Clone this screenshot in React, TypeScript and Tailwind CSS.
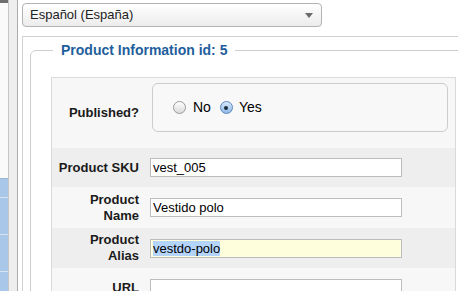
import React from "react";

// selection highlight + yellow focus bg on the alias field
function Radio({ checked }: { checked?: boolean }) {
  return checked ? (
    <span className="w-[13px] h-[13px] rounded-full border border-[#5b87bd] bg-linear-to-b from-[#d7e8fa] to-[#8fb9e8] flex items-center justify-center shrink-0">
      <span className="w-[4px] h-[4px] rounded-full bg-[#1d2b3c]" />
    </span>
  ) : (
    <span className="w-[13px] h-[13px] rounded-full border border-[#9a9a9a] bg-linear-to-b from-[#ffffff] to-[#d9d9d9] shrink-0" />
  );
}

function Label({ lines }: { lines: string[] }) {
  return (
    <div className="w-[94px] shrink-0 pr-[7px] flex flex-col items-end justify-center font-bold text-right leading-[16px] text-[#1a1a1a]">
      {lines.map((l, i) => <span key={i}>{l}</span>)}
    </div>
  );
}

function Field({ value, alias }: { value: string; alias?: boolean }) {
  return (
    <div className={"ml-[4px] w-[252px] h-[19px] border border-[#bdbdbd] px-[2px] leading-[17px] text-black whitespace-nowrap overflow-hidden " + (alias ? "bg-[#fffedc]" : "bg-white")}>
      {alias ? <span className="bg-[#b4d4fc]">{value}</span> : value}
    </div>
  );
}

export default function App() {
  const rows = [
    { lines: ["Product SKU"], value: "vest_005", h: "h-[39px]", bg: "bg-[#eeeeee]" },
    { lines: ["Product", "Name"], value: "Vestido polo", h: "h-[41px]", bg: "bg-[#f7f7f7]" },
    { lines: ["Product", "Alias"], value: "vestdo-polo", h: "h-[40px]", bg: "bg-[#eeeeee]", alias: true },
    { lines: ["URL"], value: "", h: "h-[40px]", bg: "bg-[#f7f7f7]" },
  ];

  return (
    <div className="w-[458px] h-[291px] overflow-hidden bg-white flex font-['Liberation_Sans',Arial,sans-serif] text-[13px] text-[#111]">
      {/* left sidebar strip */}
      <div className="flex w-[18px] shrink-0">
        <div className="w-[8px] flex flex-col">
          <div className="h-[3px] bg-[#6e6e6e]" />
          <div className="h-[181px] bg-[#fafafa]" />
          <div className="h-px bg-[#9db6d0]" />
          <div className="h-[19px] bg-[#a9c8e9]" />
          <div className="h-px bg-[#d6e4f3]" />
          <div className="h-[37px] bg-[#a9c8e9]" />
          <div className="h-px bg-[#d6e4f3]" />
          <div className="h-[37px] bg-[#a9c8e9]" />
          <div className="h-px bg-[#d6e4f3]" />
          <div className="h-[20px] bg-[#a9c8e9]" />
        </div>
        <div className="w-px bg-[#c6c6c6]" />
        <div className="w-[8px] bg-[#eeeeee]" />
        <div className="w-px bg-[#ababab]" />
      </div>

      <div className="w-[520px] shrink-0 pl-[4px] pt-[3px]">
        {/* language select */}
        <div className="w-[300px] h-[24px] rounded-[4px] border border-[#b3b3b3] bg-linear-to-b from-[#ffffff] to-[#ececec] flex items-center justify-between pl-[7px] pr-[8px] text-[#222]">
          <span>Español (España)</span>
          <span className="w-0 h-0 border-l-[4px] border-r-[4px] border-t-[5px] border-l-transparent border-r-transparent border-t-[#6a6a6a]" />
        </div>

        <div className="mt-[9px] border-t border-l border-[#d0d0d0] pl-[7px] pt-[5px] h-[300px]">
          <fieldset className="border border-[#cdcdcd] rounded-[6px] pl-[20px] pt-[18px] h-[300px]">
            <legend className="ml-[2px] px-[8px] text-[14px] font-bold text-[#1f5e9c] leading-[17px]">
              Product Information id: 5
            </legend>

            <div className="w-[405px] border-t border-l border-r border-[#dadada]">
              <div className="flex h-[70px] bg-[#f7f7f7]">
                <Label lines={["Published?"]} />
                <div className="pt-[5px] pl-[6px]">
                  <div className="w-[296px] h-[49px] border border-[#cccccc] rounded-[6px] bg-[#f8f8f8] flex items-center pl-[20px] text-[14px] text-black">
                    <Radio />
                    <span className="ml-[7px]">No</span>
                    <span className="ml-[9px]"><Radio checked /></span>
                    <span className="ml-[6px]">Yes</span>
                  </div>
                </div>
              </div>
              {rows.map((r, i) => (
                <div key={i} className={"flex items-center " + r.h + " " + r.bg}>
                  <Label lines={r.lines} />
                  <Field value={r.value} alias={r.alias} />
                </div>
              ))}
            </div>
          </fieldset>
        </div>
      </div>
    </div>
  );
}
